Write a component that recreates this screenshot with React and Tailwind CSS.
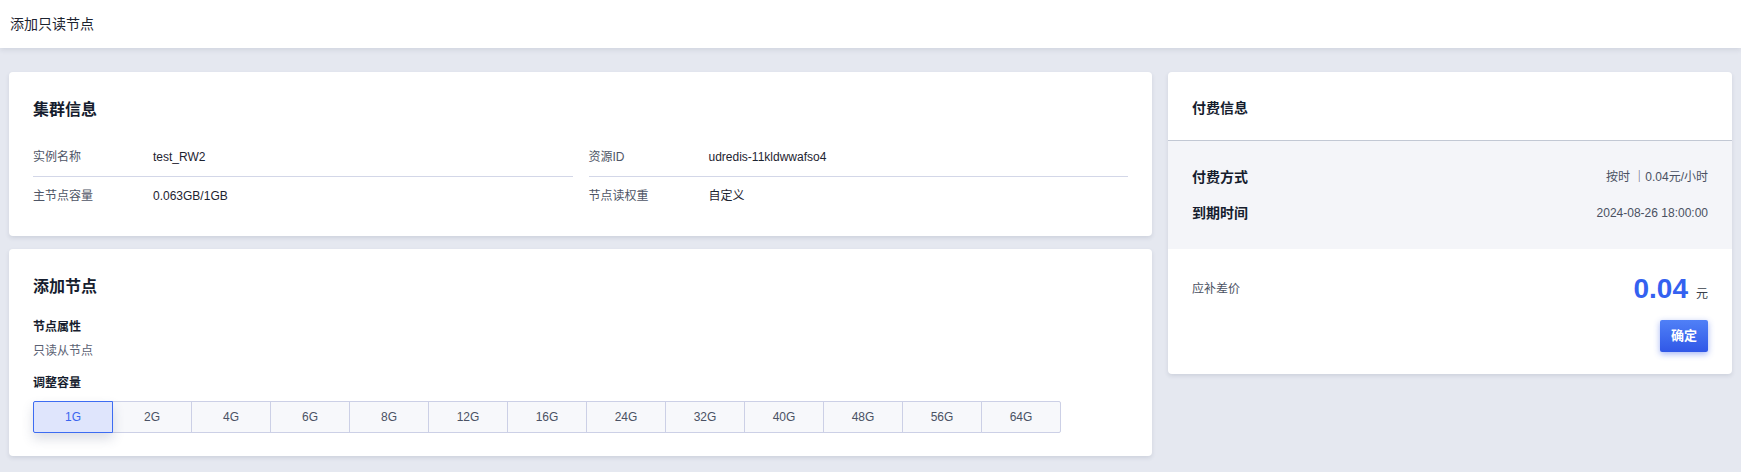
import React from "react";

const sizes = ["1G", "2G", "4G", "6G", "8G", "12G", "16G", "24G", "32G", "40G", "48G", "56G", "64G"];

function InfoRow({ label, value, border }) {
  return (
    <div
      className={
        "flex items-center text-xs " +
        (border ? "h-[39px] border-b border-[#d3d7e8]" : "h-[38px]")
      }
    >
      <div className="w-[120px] shrink-0 text-[#4e5566]">{label}</div>
      <div className="text-[#1d2330]">{value}</div>
    </div>
  );
}

export default function App() {
  return (
    <div className="min-h-[472px] bg-[#e5e8f0] font-['Liberation_Sans','Noto_Sans_CJK_SC',sans-serif]">
      <div className="relative z-10 flex h-12 items-center bg-white px-[10px] text-sm text-[#1d2330] shadow-[0_2px_5px_rgba(40,50,80,0.10)]">
        添加只读节点
      </div>
      <div className="flex items-start gap-4 px-[9px] pt-6">
        <div className="flex min-w-0 flex-1 flex-col gap-[13px]">
          {/* 集群信息 */}
          <div className="rounded-[4px] bg-white px-6 pb-[21px] pt-6 shadow-[0_2px_4px_rgba(40,50,80,0.12)]">
            <div className="text-base font-bold leading-7 text-[#161d2e]">集群信息</div>
            <div className="mt-[14px] grid grid-cols-2 gap-x-4">
              <div>
                <InfoRow label="实例名称" value="test_RW2" border />
                <InfoRow label="主节点容量" value="0.063GB/1GB" />
              </div>
              <div>
                <InfoRow label="资源ID" value="udredis-11kldwwafso4" border />
                <InfoRow label="节点读权重" value="自定义" />
              </div>
            </div>
          </div>
          {/* 添加节点 */}
          <div className="rounded-[4px] bg-white px-6 pb-[23px] pt-6 shadow-[0_2px_4px_rgba(40,50,80,0.12)]">
            <div className="text-base font-bold leading-7 text-[#161d2e]">添加节点</div>
            <div className="mt-4 text-xs font-bold leading-5 text-[#161d2e]">节点属性</div>
            <div className="mt-1 text-xs leading-5 text-[#5a6173]">只读从节点</div>
            <div className="mt-3 text-xs font-bold leading-5 text-[#161d2e]">调整容量</div>
            <div className="mt-2 flex">
              {sizes.map((s, i) => (
                <div
                  key={s}
                  className={
                    i === 0
                      ? "relative z-10 flex h-8 w-20 items-center justify-center rounded-l-[2px] border border-[#3d6cf2] bg-[#dfe5fc] text-xs text-[#3a65ef] shadow-[0_6px_12px_rgba(60,70,110,0.18)]"
                      : "-ml-px flex h-8 w-20 items-center justify-center border border-[#ccd0e6] bg-[#f7f8fb] text-xs text-[#4a5264]" +
                        (i === sizes.length - 1 ? " rounded-r-[2px]" : "")
                  }
                >
                  {s}
                </div>
              ))}
            </div>
          </div>
        </div>
        {/* 付费信息 */}
        <div className="w-[564px] shrink-0 overflow-hidden rounded-[4px] bg-white shadow-[0_2px_4px_rgba(40,50,80,0.12)]">
          <div className="border-b border-[#c2c8d4] px-6 pb-[22px] pt-[26px] text-sm font-bold leading-5 text-[#161d2e]">
            付费信息
          </div>
          <div className="flex flex-col gap-3 bg-[#f4f5f9] px-6 py-6">
            <div className="flex h-6 items-center justify-between">
              <div className="text-sm font-bold text-[#161d2e]">付费方式</div>
              <div className="text-xs text-[#4a5162]">按时 ｜0.04元/小时</div>
            </div>
            <div className="flex h-6 items-center justify-between">
              <div className="text-sm font-bold text-[#161d2e]">到期时间</div>
              <div className="text-xs text-[#4a5162]">2024-08-26 18:00:00</div>
            </div>
          </div>
          <div className="px-6 pb-[22px] pt-6">
            <div className="flex h-8 items-center justify-between">
              <div className="text-xs text-[#4a5162]">应补差价</div>
              <div className="flex items-baseline">
                <span className="text-[28px] font-bold leading-8 text-[#3461f0]">0.04</span>
                <span className="ml-2 text-xs text-[#3a3f4b]">元</span>
              </div>
            </div>
            <div className="mt-[15px] flex justify-end">
              <button className="h-8 w-12 rounded-[2px] bg-gradient-to-b from-[#5080f7] to-[#3157e7] text-[13px] font-bold text-white shadow-[0_2px_6px_rgba(51,88,230,0.45)]">
                确定
              </button>
            </div>
          </div>
        </div>
      </div>
    </div>
  );
}
